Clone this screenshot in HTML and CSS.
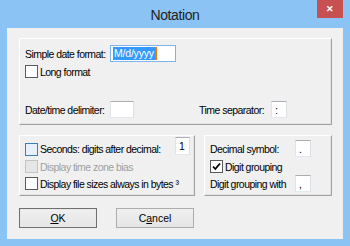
FILE: index.html
```html
<!DOCTYPE html>
<html lang="en">
<head>
    <meta charset="UTF-8">
    <title>Notation</title>
    <link rel="stylesheet" href="styles.css">
</head>
<body>
    <div class="window">
        <div class="titlebar">
            <span class="title">Notation</span>
            <span class="close">&#x2715;</span>
        </div>
        <div class="client">
            <div class="group top-group">
                <div>
                    <div class="row">
                        <span class="label wide">Simple date format:</span>
                        <span class="field focused date-field"><span class="selected">M/d/yyyy</span><span class="caret"></span></span>
                    </div>
                    <div class="check-row long-row">
                        <span class="box"></span>
                        <span>Long format</span>
                    </div>
                </div>
                <div class="row bottom-row">
                    <span class="label wide">Date/time delimiter:</span>
                    <span class="field delim-field"></span>
                    <span class="label sep-label">Time separator:</span>
                    <span class="field small-field">:</span>
                </div>
            </div>

            <div class="lower">
                <div class="group left-group">
                    <div class="check-row seconds-row">
                        <span class="box hot"></span>
                        <span>Seconds: digits after decimal:</span>
                        <span class="field digit-field">1</span>
                    </div>
                    <div class="check-row disabled">
                        <span class="box off"></span>
                        <span>Display time zone bias</span>
                    </div>
                    <div class="check-row">
                        <span class="box"></span>
                        <span>Display file sizes always in bytes &sup3;</span>
                    </div>
                </div>
                <div class="group right-group">
                    <div class="row">
                        <span>Decimal symbol:</span>
                        <span class="field sym-field">.</span>
                    </div>
                    <div class="check-row grouping-row">
                        <span class="box checked">
                            <svg width="11" height="11" viewBox="0 0 11 11"><path d="M2 5.5 L4.3 8 L9 2.5" fill="none" stroke="#000" stroke-width="1.8"/></svg>
                        </span>
                        <span>Digit grouping</span>
                    </div>
                    <div class="row with-row">
                        <span>Digit grouping with</span>
                        <span class="field sym-field">,</span>
                    </div>
                </div>
            </div>

            <div class="buttons">
                <span class="button default"><u>O</u>K</span>
                <span class="button">C<u>a</u>ncel</span>
            </div>
        </div>
    </div>
</body>
</html>
```
FILE: styles.css
```css
body {
    margin: 0;
    background: #8cc3f5;
    font-family: "Liberation Sans", Arial, sans-serif;
    font-size: 10.5px;
    letter-spacing: -0.55px;
    color: #000;
}
.window {
    width: 350px;
    height: 246px;
    display: flex;
    flex-direction: column;
}
.titlebar {
    height: 28px;
    position: relative;
    display: flex;
    align-items: center;
    justify-content: center;
}
.title {
    font-size: 14px;
    letter-spacing: -0.4px;
    color: #222;
    margin-top: 1px;
}
.close {
    position: absolute;
    right: 7px;
    top: 0;
    width: 26px;
    height: 18px;
    background: #c75050;
    color: #fff;
    font-size: 9px;
    font-weight: bold;
    letter-spacing: 0;
    display: flex;
    align-items: center;
    justify-content: center;
}
.client {
    margin: 0 7px 7px;
    height: 211px;
    box-sizing: border-box;
    background: #f0f0f0;
    padding: 10px 11px 0 12px;
}
.group {
    box-sizing: border-box;
    border: 1px solid;
    border-color: #fff #a0a0a0 #a0a0a0 #fff;
    box-shadow: inset -1px -1px 0 #e3e3e3;
}
.top-group {
    width: 313px;
    height: 87px;
    padding: 6px 5px 6px 5px;
    display: flex;
    flex-direction: column;
    justify-content: space-between;
}
.row {
    display: flex;
    align-items: center;
}
.label.wide {
    width: 85px;
}
.sep-label {
    margin-left: auto;
    margin-right: 7px;
}
.check-row {
    display: flex;
    align-items: center;
    height: 13px;
}
.long-row {
    margin-top: 3px;
}
.box {
    width: 13px;
    height: 13px;
    box-sizing: border-box;
    border: 1px solid #5a5a5a;
    background: #fff;
    margin-right: 2px;
    flex: none;
    display: flex;
    align-items: center;
    justify-content: center;
}
.box.hot {
    border-color: #3c7fb1;
    background: #e8f1fb;
}
.box.off {
    border-color: #c4c4c4;
    background: #e6e6e6;
}
.disabled {
    color: #a0a0a0;
}
.field {
    box-sizing: border-box;
    height: 17px;
    background: #fff;
    border: 1px solid;
    border-color: #abadb3 #dbdfe6 #e3e9ef #e2e3ea;
    display: flex;
    align-items: center;
    padding-left: 3px;
    letter-spacing: 0;
}
.field.focused {
    border-color: #7eb4ea;
}
.date-field {
    width: 66px;
    padding-left: 2px;
}
.selected {
    background: #3399ff;
    color: #fff;
    line-height: 13px;
    padding: 0 1px;
    letter-spacing: -0.2px;
}
.caret {
    width: 2px;
    height: 13px;
    background: #f07800;
}
.delim-field {
    width: 24px;
}
.small-field {
    width: 16px;
    margin-right: 39px;
}
.lower {
    display: flex;
    gap: 9px;
    margin-top: 10px;
}
.left-group {
    width: 176px;
    height: 61px;
    padding: 1px 4px 0 5px;
}
.seconds-row {
    height: 19px;
    align-items: flex-end;
    margin-bottom: 4px;
}
.seconds-row span:nth-child(2) {
    margin-bottom: 1px;
}
.left-group .check-row + .check-row + .check-row {
    margin-top: 4px;
}
.digit-field {
    width: 15px;
    height: 18px;
    margin-left: auto;
    align-self: flex-start;
}
.right-group {
    width: 128px;
    height: 61px;
    padding: 4px 20px 0 5px;
}
.right-group .row {
    justify-content: space-between;
}
.sym-field {
    width: 16px;
}
.grouping-row {
    margin-top: 3px;
}
.with-row {
    margin-top: 2px;
}
.buttons {
    display: flex;
    gap: 19px;
    margin-top: 12px;
}
.button {
    width: 78px;
    height: 20px;
    box-sizing: border-box;
    border: 1px solid #adadad;
    background: linear-gradient(#f0f0f0, #e5e5e5);
    display: flex;
    align-items: center;
    justify-content: center;
    letter-spacing: 0;
}
.button.default {
    border-color: #707070;
    box-shadow: inset 0 0 0 1px #e8e8e8;
}
```
